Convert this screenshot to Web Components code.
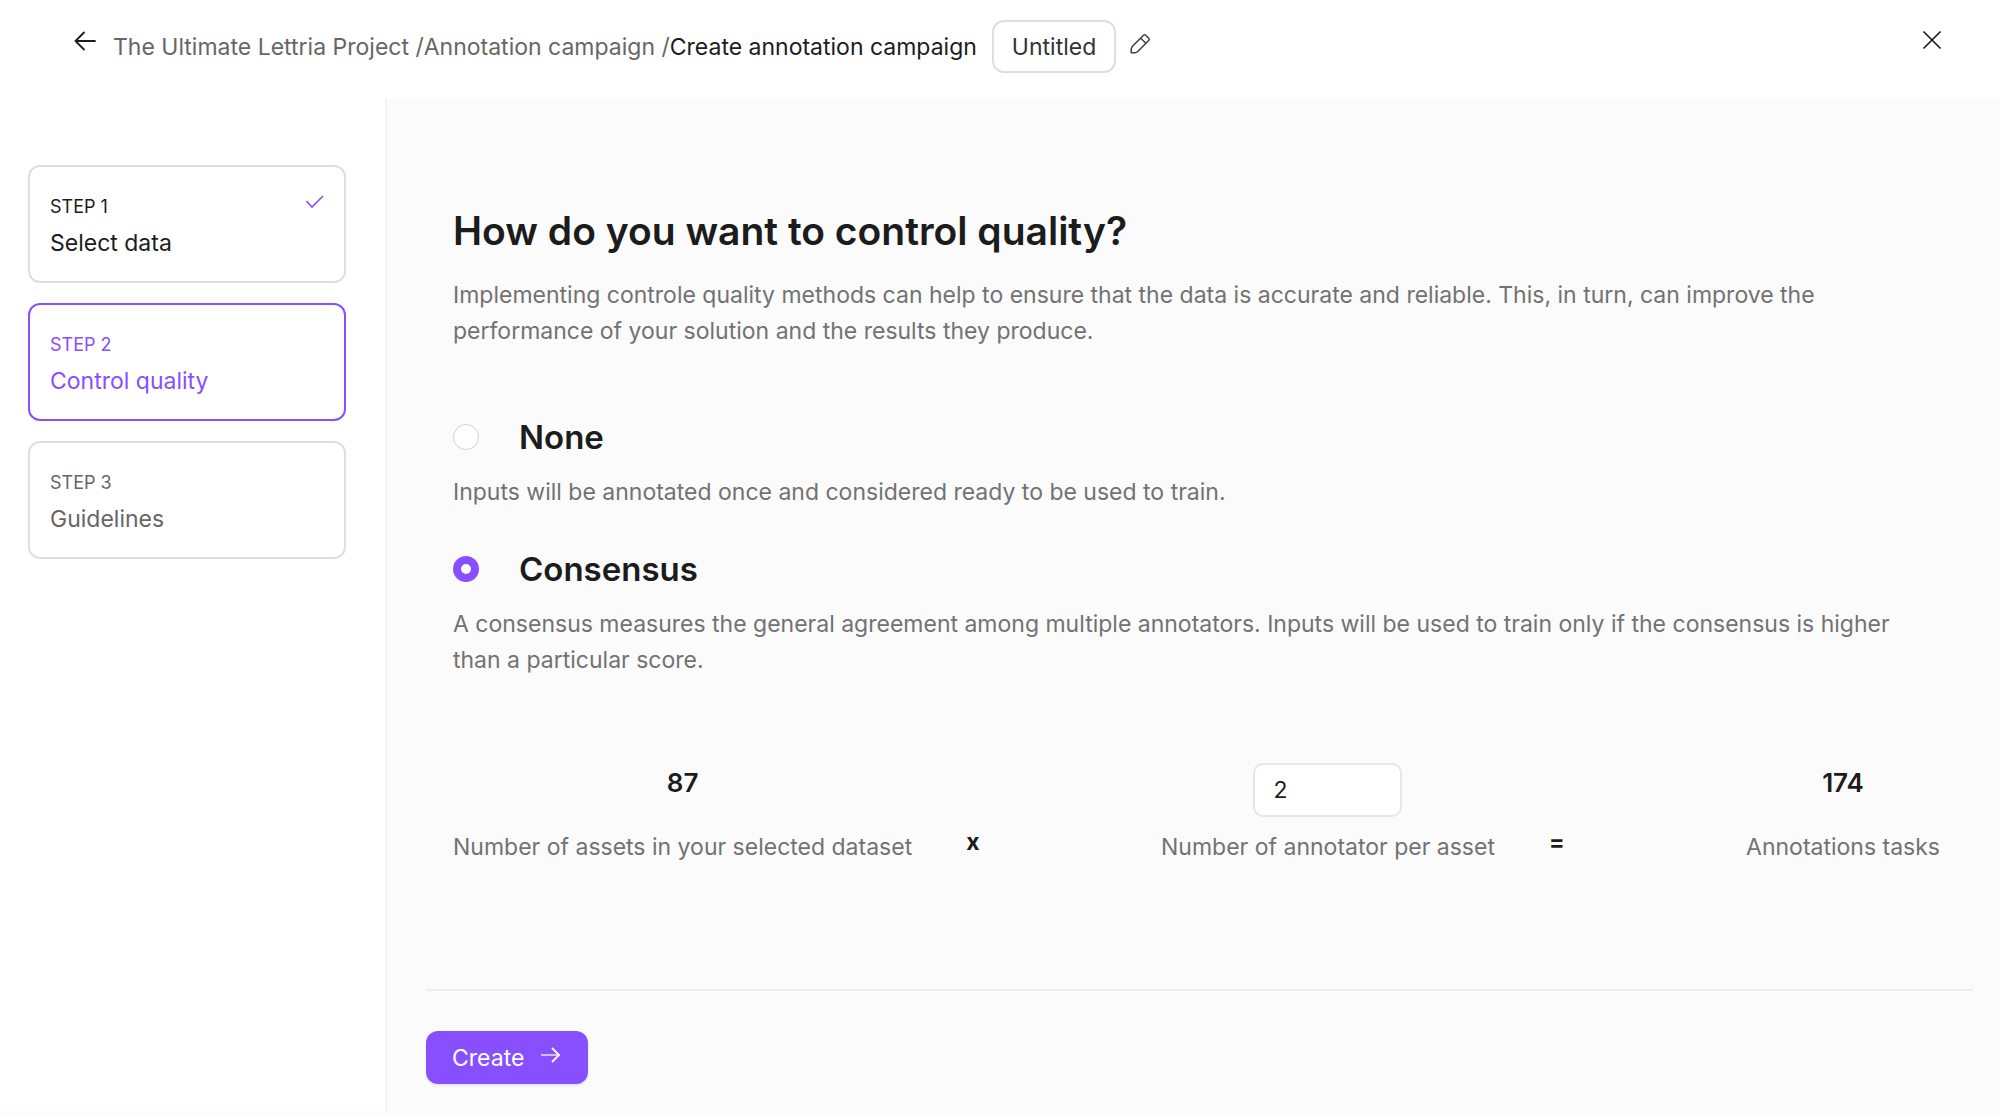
<!DOCTYPE html>
<html lang="en">
<head>
<meta charset="utf-8">
<meta name="viewport" content="width=device-width, initial-scale=1">
<title>Create annotation campaign</title>
<style>
  :root {
    --purple: #874fff;
    --ink: #1c1c1c;
    --muted: #727272;
    --line: #dedede;
    --soft: #ededed;
    --surface: #fbfbfb;
  }
  body {
    margin: 0;
    font: 400 23px/36px Inter, "Liberation Sans", sans-serif;
    color: var(--ink);
    background: var(--surface);
  }
</style>
</head>
<body>
<campaign-page>
  <campaign-header slot="header"></campaign-header>
  <step-card slot="steps" state="done" label="STEP 1">Select data</step-card>
  <step-card slot="steps" state="current" label="STEP 2">Control quality</step-card>
  <step-card slot="steps" state="todo" label="STEP 3">Guidelines</step-card>
  <quality-form></quality-form>
</campaign-page>

<script>
const define = (name, html, setup) => {
  const template = document.createElement('template');
  template.innerHTML = '<style>*{box-sizing:border-box}svg{display:block;fill:none;stroke:currentColor}</style>' + html;
  customElements.define(name, class extends HTMLElement {
    constructor() {
      super();
      this.attachShadow({ mode: 'open' }).append(template.content.cloneNode(true));
    }
    connectedCallback() {
      if (setup) setup(this, this.shadowRoot);
    }
  });
};

define('campaign-page', `
  <style>
    :host { display: flex; flex-direction: column; min-height: 100vh; padding-bottom: 6px; box-sizing: border-box; }
    .body { display: flex; flex: 1; }
    nav { flex: none; width: 387px; display: flex; flex-direction: column; gap: 20px; padding: 66px 39px 0 28px; background: #fff; border-right: 2px solid #f2f2f2; }
    main { flex: 1; min-width: 0; }
  </style>
  <slot name="header"></slot>
  <div class="body">
    <nav aria-label="Steps"><slot name="steps"></slot></nav>
    <main><slot></slot></main>
  </div>`);

define('campaign-header', `
  <style>
    :host { display: block; background: #fff; }
    header { display: flex; align-items: flex-start; height: 99px; padding: 20px 56px 0 72px; }
    button { flex: none; padding: 0; border: 0; background: none; color: var(--ink); cursor: pointer; }
    .back { margin: 8px 15px 0 0; }
    .close { margin: 8px 0 0 auto; }
    .edit { margin: 12px 0 0 12px; color: #444; }
    .crumbs { display: flex; align-items: center; height: 53px; white-space: pre; color: #666; }
    a { color: inherit; text-decoration: none; }
    [aria-current] { color: var(--ink); }
    input { field-sizing: content; height: 53px; margin-left: 15px; padding: 0 18px; font: inherit; color: #333; background: #fff; border: 2px solid var(--line); border-radius: 12px; }
  </style>
  <header>
    <button class="back" aria-label="Back"><svg width="26" height="26" viewBox="0 0 26 26" stroke-width="1.800" stroke-linecap="round" stroke-linejoin="round"><path d="M23 13H4M12 4.500L3.500 13l8.500 8.500"/></svg></button>
    <nav class="crumbs" aria-label="Breadcrumb"><a href="#project">The Ultimate Lettria Project </a><span>/</span><a href="#campaigns">Annotation campaign </a><span>/</span><span aria-current="page">Create annotation campaign</span></nav>
    <input type="text" value="Untitled" aria-label="Campaign name">
    <button class="edit" aria-label="Rename"><svg width="24" height="24" viewBox="0 0 24 24" stroke-width="1.600" stroke-linejoin="round"><path d="M15.500 3.300Q16.600 2.200 17.700 3.300L20.700 6.300Q21.800 7.400 20.700 8.500L10.500 18.700Q8.500 20.800 6.800 20.800H3.200V17.200Q3.200 15.500 5.200 13.500zM12.700 6.200L17.900 11.300"/></svg></button>
    <button class="close" aria-label="Close"><svg width="24" height="24" viewBox="0 0 24 24" stroke-width="1.700"><path d="M3.500 3.500l17 17M20.500 3.500l-17 17"/></svg></button>
  </header>`);

define('step-card', `
  <style>
    :host { display: flex; justify-content: space-between; height: 118px; box-sizing: border-box; padding: 22px 20px; border: 2px solid var(--line); border-radius: 12px; }
    :host([state="current"]) { border-color: var(--purple); color: var(--purple); }
    :host([state="todo"]) { color: #666; }
    .label { font-size: 18px; line-height: 36px; }
    .check { color: var(--purple); }
    :host(:not([state="done"])) .check { display: none; }
  </style>
  <div><div class="label"></div><div><slot></slot></div></div>
  <svg class="check" width="20" height="26" viewBox="0 0 20 26" stroke-width="1.600"><path d="M2.500 12l5.500 6L19 7"/></svg>`,
  (host, root) => { root.querySelector('.label').textContent = host.getAttribute('label'); });

define('stat-item', `
  <style>
    :host { display: flex; flex-direction: column; align-items: center; justify-content: space-between; height: 102px; color: var(--muted); }
    ::slotted(strong) { font-size: 26px; line-height: 40px; font-weight: 600; color: var(--ink); }
  </style>
  <slot name="value"></slot><slot></slot>`);

define('quality-form', `
  <style>
    :host { display: block; padding: 108px 27px 27px 39px; }
    .content { padding: 0 33px 0 27px; }
    h1, h2, p { margin: 0; }
    h1 { font-size: 39px; line-height: 48px; font-weight: 600; }
    p { color: var(--muted); }
    .intro { margin-top: 22px; }
    fieldset { display: flex; flex-direction: column; gap: 39px; margin: 68px 0 0; padding: 0; border: 0; min-width: 0; }
    label { display: flex; align-items: center; gap: 40px; margin-bottom: 17px; font-size: 33px; line-height: 40px; font-weight: 600; }
    input[type="radio"] { appearance: none; flex: none; width: 26px; height: 26px; margin: 0; border: 1px solid #d2d2d2; border-radius: 50%; background: #fff; }
    input[type="radio"]:checked { border: 8px solid var(--purple); }
    .stats { display: flex; justify-content: space-between; margin-top: 85px; }
    .group { display: flex; align-items: flex-end; gap: 54px; }
    .op { font-weight: 700; line-height: 46px; }
    .count { width: 149px; height: 54px; padding: 0 18px; font: inherit; color: var(--ink); background: #fff; border: 2px solid #e6e6e6; border-radius: 10px; }
    footer { margin-top: 124px; padding-top: 40px; border-top: 2px solid var(--soft); }
    button { display: flex; align-items: center; gap: 16px; height: 53px; padding: 0 26px; font: inherit; color: #fff; background: var(--purple); border: 0; border-radius: 12px; box-shadow: 0 2px 3px #874fff22; cursor: pointer; }
    button svg { margin-bottom: 6px; }
  </style>
  <form>
    <div class="content">
      <h1>How do you want to control quality?</h1>
      <p class="intro">Implementing controle quality methods can help to ensure that the data is accurate and reliable. This, in turn, can improve the performance of your solution and the results they produce.</p>
      <fieldset aria-label="Quality method">
        <div>
          <label for="none"><input type="radio" name="method" id="none">None</label>
          <p>Inputs will be annotated once and considered ready to be used to train.</p>
        </div>
        <div>
          <label for="consensus"><input type="radio" name="method" id="consensus" checked>Consensus</label>
          <p>A consensus measures the general agreement among multiple annotators. Inputs will be used to train only if the consensus is higher than a particular score.</p>
        </div>
      </fieldset>
      <div class="stats">
        <div class="group">
          <stat-item><strong slot="value">87</strong>Number of assets in your selected dataset</stat-item>
          <span class="op">x</span>
        </div>
        <div class="group">
          <stat-item><input slot="value" class="count" type="text" inputmode="numeric" value="2" aria-label="Number of annotator per asset">Number of annotator per asset</stat-item>
          <span class="op">=</span>
        </div>
        <stat-item><strong slot="value">174</strong>Annotations tasks</stat-item>
      </div>
    </div>
    <footer>
      <button type="button">Create <svg width="22" height="22" viewBox="0 0 22 22" stroke-width="1.800"><path d="M1 11H19" stroke-opacity=".7"/><path d="M12 4l7 7-7 7"/></svg></button>
    </footer>
  </form>`);
</script>
</body>
</html>
